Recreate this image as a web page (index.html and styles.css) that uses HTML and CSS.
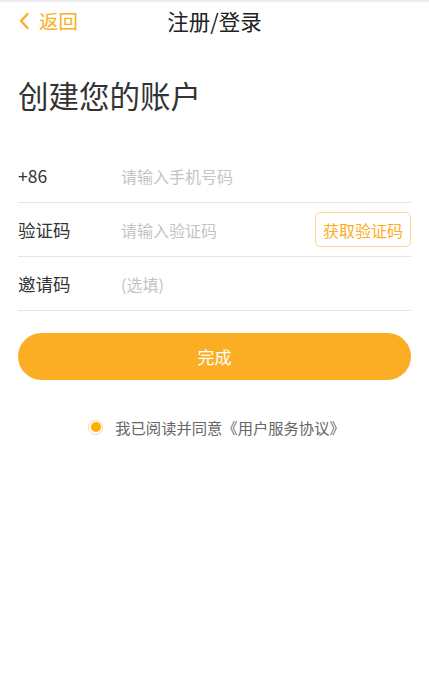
FILE: index.html
```html
<!DOCTYPE html>
<html lang="zh">
<head>
<meta charset="utf-8">
<link rel="stylesheet" href="styles.css">
</head>
<body>
<header class="topbar">
  <div class="back">
    <svg class="back-icon" width="12" height="18" viewBox="0 0 12 18"><path d="M9.5 2 L3 9 L9.5 16" fill="none" stroke="#fbae24" stroke-width="2.4" stroke-linecap="round" stroke-linejoin="round"/></svg>
    <span>返回</span>
  </div>
  <div class="title">注册/登录</div>
  <div class="spacer"></div>
</header>
<main class="content">
  <h1 class="heading">创建您的账户</h1>
  <div class="form">
    <div class="row">
      <span class="label">+86</span>
      <span class="placeholder">请输入手机号码</span>
    </div>
    <div class="row">
      <span class="label">验证码</span>
      <span class="placeholder">请输入验证码</span>
      <span class="code-btn">获取验证码</span>
    </div>
    <div class="row">
      <span class="label">邀请码</span>
      <span class="placeholder">(选填)</span>
    </div>
  </div>
  <div class="submit">完成</div>
  <div class="agree">
    <span class="radio"><span class="dot"></span></span>
    <span class="agree-text">我已阅读并同意《用户服务协议》</span>
  </div>
</main>
</body>
</html>
```
FILE: styles.css
```css
* { box-sizing: border-box; }
html, body { margin: 0; padding: 0; background: #fff; }
body {
  font-family: "Noto Sans CJK SC", "Noto Sans", sans-serif;
  color: #333;
  width: 429px;
  height: 692px;
  overflow: hidden;
}
.topbar {
  height: 39px;
  display: grid;
  grid-template-columns: 1fr auto 1fr;
  align-items: center;
  padding: 0 18px;
  border-top: 2px solid #ececec;
}
.back {
  display: flex;
  align-items: center;
  gap: 9px;
  color: #fbae24;
  font-size: 19.5px;
}
.back-icon { display: block; }
.title {
  font-size: 21.5px;
  color: #222;
  line-height: 1;
}
.content { padding: 0 18px; }
.heading {
  margin: 35px 0 0;
  font-size: 30.5px;
  font-weight: normal;
  color: #333;
  line-height: 42px;
}
.form { margin-top: 33px; }
.row {
  height: 54px;
  display: flex;
  align-items: center;
  border-bottom: 1px solid #e6e6e6;
}
.label {
  width: 103px;
  font-size: 17.5px;
  color: #333;
}
.placeholder {
  flex: 1;
  font-size: 16px;
  color: #c4c4c4;
}
.code-btn {
  height: 35px;
  padding: 0 7px;
  display: flex;
  align-items: center;
  border: 1px solid #fcd894;
  border-radius: 5px;
  color: #fbae24;
  font-size: 16px;
}
.submit {
  margin-top: 22px;
  height: 47px;
  border-radius: 24px;
  background: #fbae24;
  color: #fff;
  font-size: 17px;
  display: flex;
  align-items: center;
  justify-content: center;
}
.agree {
  margin-top: 36px;
  display: flex;
  align-items: center;
  justify-content: center;
  gap: 12px;
  padding-left: 4px;
}
.radio {
  width: 15px;
  height: 15px;
  border-radius: 50%;
  border: 1px solid #fcd894;
  display: flex;
  align-items: center;
  justify-content: center;
}
.dot {
  width: 10px;
  height: 10px;
  border-radius: 50%;
  background: #fbae00;
}
.agree-text {
  font-size: 15.3px;
  color: #666;
}
```
